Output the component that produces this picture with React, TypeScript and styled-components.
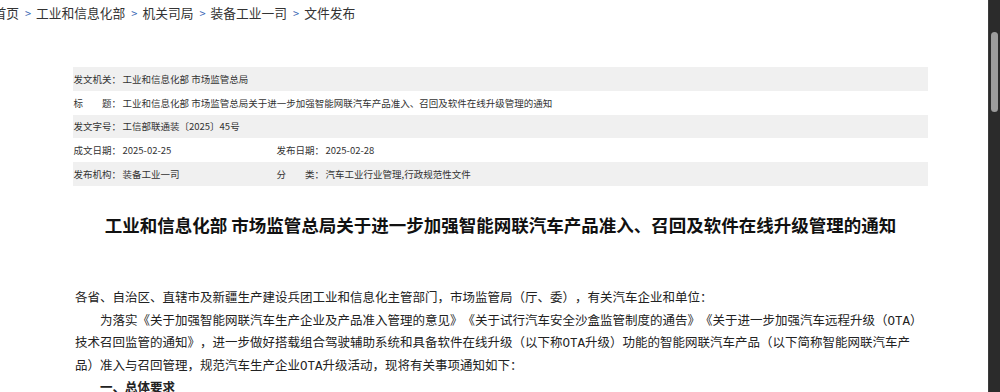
import styled, { createGlobalStyle } from "styled-components";

const GlobalStyle = createGlobalStyle`
	html, body {
		margin: 0;
		padding: 0;
		background: #ffffff;
		overflow: hidden;
	}
	body {
		font-family: "Noto Sans CJK SC", "Noto Sans", sans-serif;
		color: #333333;
		text-spacing-trim: space-all;
	}
`;

const Page = styled.div`
	display: flex;
	flex-direction: row;
	width: 1000px;
	height: 392px;
	overflow: hidden;
`;

const Main = styled.div`
	flex: 1;
	min-width: 0;
	overflow: hidden;
	background: #ffffff;
`;

const ScrollTrack = styled.div`
	width: 11px;
	flex-shrink: 0;
	background: #2b2b2b;
	border-left: 1px solid #3c3c3c;
	padding-top: 32px;
	display: flex;
	justify-content: center;
`;

const ScrollThumb = styled.div`
	width: 7px;
	height: 80px;
	border-radius: 4px;
	background: #9c9c9c;
`;

const Crumbs = styled.nav`
	display: flex;
	align-items: center;
	height: 24px;
	margin-left: -6.5px;
	font-size: 12.75px;
	color: #333333;
	white-space: nowrap;
`;

const Sep = styled.span`
	margin: 0 5px 0 6px;
	color: #3a68b5;
	font-size: 11px;
`;

const Article = styled.div`
	width: 855px;
	margin: 43px 0 0 73px;
`;

const InfoTable = styled.div`
	display: flex;
	flex-direction: column;
	font-size: 9.5px;
	color: #333333;
`;

const InfoRow = styled.div<{ $shade: boolean; $split: boolean }>`
	display: grid;
	grid-template-columns: ${(p) => (p.$split ? "49.5px 153.5px 49.5px 1fr" : "49.5px 1fr")};
	align-items: center;
	height: 23.75px;
	background: ${(p) => (p.$shade ? "#f0f0f0" : "#ffffff")};
	white-space: nowrap;
`;

const Label = styled.span`
	padding-left: 0.5px;
`;

const Value = styled.span``;

const Title = styled.h1`
	margin: 24px 0 0;
	text-align: center;
	font-size: 17.5px;
	line-height: 30px;
	font-weight: 700;
	color: #111111;
`;

const Body = styled.div`
	margin-top: 48.5px;
	padding-left: 2px;
	width: 852px;
	font-family: "Liberation Mono", "Noto Sans CJK SC", monospace;
	font-size: 12.5px;
	line-height: 22.5px;
	color: #222222;
`;

const Para = styled.p<{ $indent?: boolean; $bold?: boolean }>`
	margin: 0;
	text-indent: ${(p) => (p.$indent ? "2em" : "0")};
	font-weight: ${(p) => (p.$bold ? 700 : 400)};
`;

const crumbs = ["首页", "工业和信息化部", "机关司局", "装备工业一司", "文件发布"];

const rows: { shade: boolean; cells: string[] }[] = [
	{ shade: true, cells: ["发文机关：", "工业和信息化部 市场监管总局"] },
	{
		shade: false,
		cells: [
			"标　　题：",
			"工业和信息化部 市场监管总局关于进一步加强智能网联汽车产品准入、召回及软件在线升级管理的通知",
		],
	},
	{ shade: true, cells: ["发文字号：", "工信部联通装〔2025〕45号"] },
	{ shade: false, cells: ["成文日期：", "2025-02-25", "发布日期：", "2025-02-28"] },
	{
		shade: true,
		cells: ["发布机构：", "装备工业一司", "分　　类：", "汽车工业行业管理,行政规范性文件"],
	},
];

export default function App() {
	return (
		<Page>
			<GlobalStyle />
			<Main>
				<Crumbs>
					{crumbs.map((c, i) => (
						<span key={c}>
							{i > 0 && <Sep>&gt;</Sep>}
							{c}
						</span>
					))}
				</Crumbs>
				<Article>
					<InfoTable>
						{rows.map((r, i) => (
							<InfoRow key={i} $shade={r.shade} $split={r.cells.length > 2}>
								{r.cells.map((c, j) =>
									j % 2 === 0 ? <Label key={j}>{c}</Label> : <Value key={j}>{c}</Value>
								)}
							</InfoRow>
						))}
					</InfoTable>
					<Title>
						工业和信息化部 市场监管总局关于进一步加强智能网联汽车产品准入、召回及软件在线升级管理的通知
					</Title>
					<Body>
						<Para>
							各省、自治区、直辖市及新疆生产建设兵团工业和信息化主管部门，市场监管局（厅、委），有关汽车企业和单位：
						</Para>
						<Para $indent>
							为落实《关于加强智能网联汽车生产企业及产品准入管理的意见》《关于试行汽车安全沙盒监管制度的通告》《关于进一步加强汽车远程升级（OTA）技术召回监管的通知》，进一步做好搭载组合驾驶辅助系统和具备软件在线升级（以下称OTA升级）功能的智能网联汽车产品（以下简称智能网联汽车产品）准入与召回管理，规范汽车生产企业OTA升级活动，现将有关事项通知如下：
						</Para>
						<Para $indent $bold>
							一、总体要求
						</Para>
					</Body>
				</Article>
			</Main>
			<ScrollTrack>
				<ScrollThumb />
			</ScrollTrack>
		</Page>
	);
}
